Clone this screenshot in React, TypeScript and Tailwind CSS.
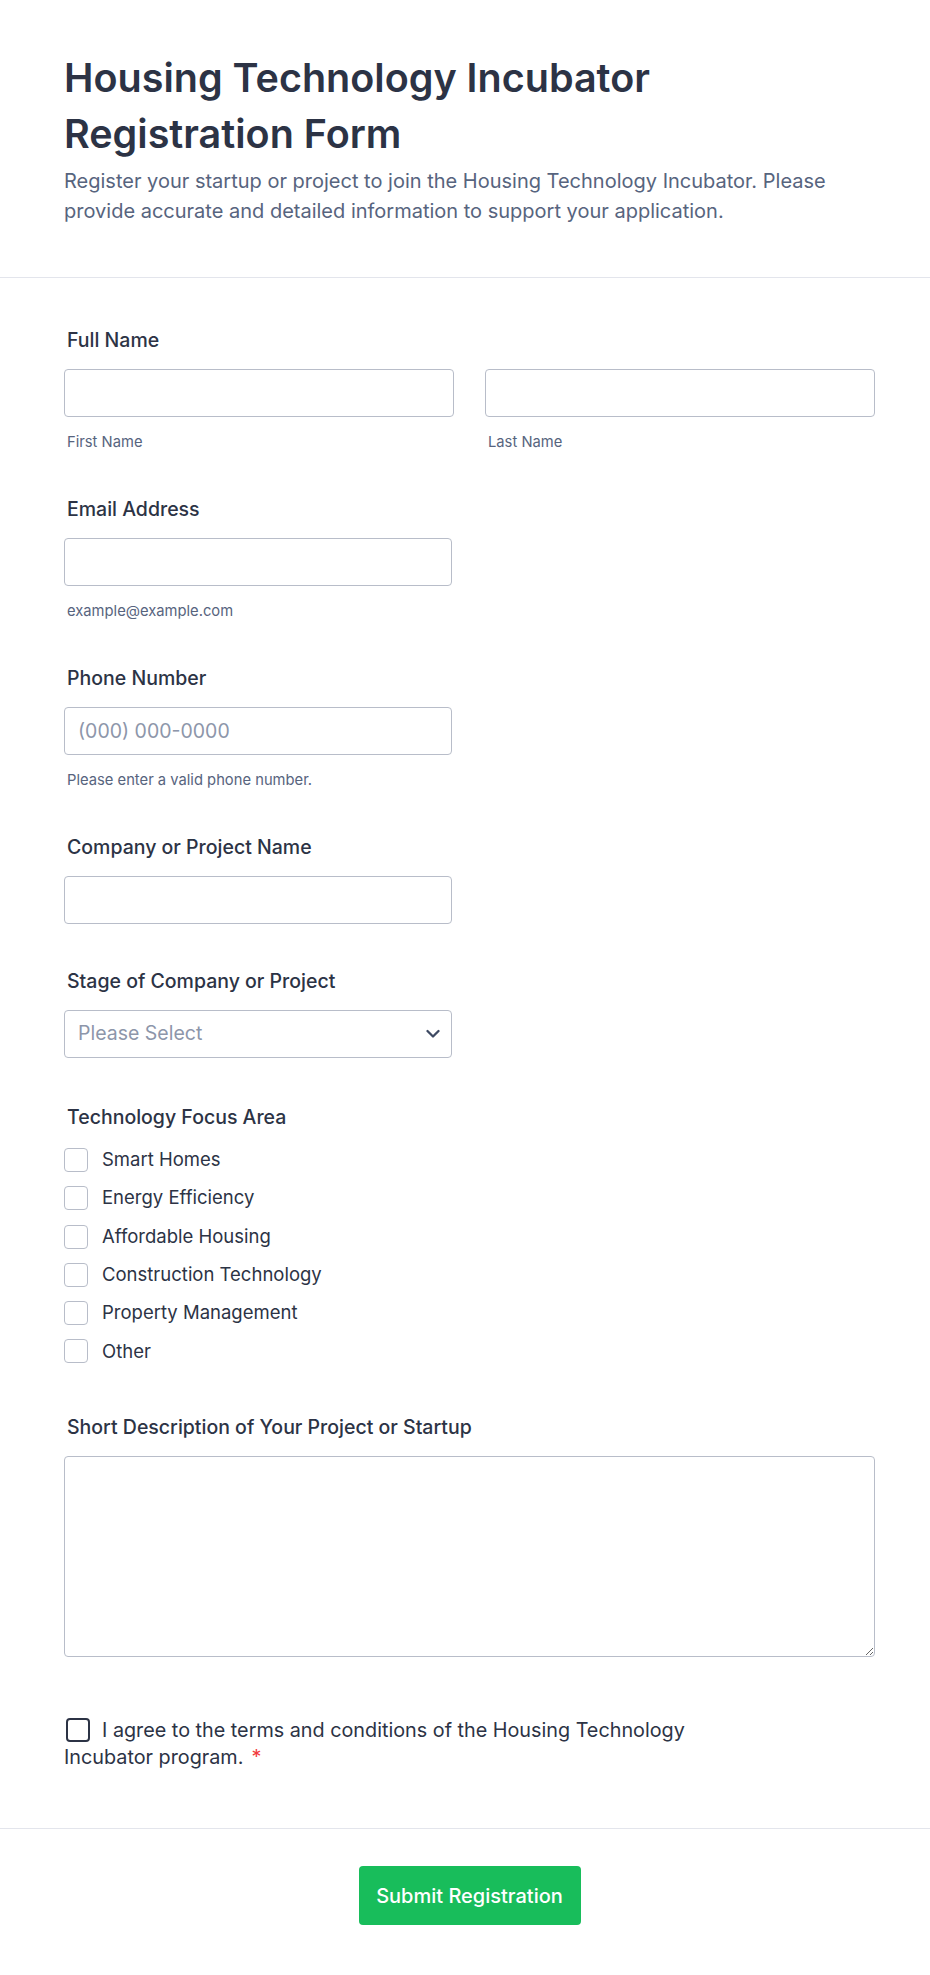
import { useState } from "react";

const focusAreas = [
	"Smart Homes",
	"Energy Efficiency",
	"Affordable Housing",
	"Construction Technology",
	"Property Management",
	"Other",
];

function Label({ children }: { children: React.ReactNode }) {
	return (
		<div className="mb-[17px] pl-[3px] text-[19.5px] leading-[24px] font-medium text-[#2c3345]">
			{children}
		</div>
	);
}

function Hint({ children }: { children: React.ReactNode }) {
	return (
		<p className="mt-[15px] pl-[3px] text-[14.75px] leading-[20px] text-[#57647e]">
			{children}
		</p>
	);
}

const inputClass =
	"block h-[48px] w-full rounded-[4px] border border-[#b8bdc9] bg-white px-[13px] text-[19.5px] text-[#2c3345] placeholder:text-[#8d96aa] outline-none";

export default function App() {
	const [checked, setChecked] = useState<string[]>([]);
	const [agree, setAgree] = useState(false);

	const toggle = (item: string) =>
		setChecked((prev) =>
			prev.includes(item) ? prev.filter((x) => x !== item) : [...prev, item],
		);

	return (
		<div className="min-h-[1975px] bg-white font-[Inter,sans-serif] text-[#2c3345]">
			<div className="border-b border-[#e3e5ec] pt-[50px] pr-[55px] pb-[51px] pl-[64px]">
				<h1 className="text-[39.5px] leading-[56px] font-semibold text-[#2c3345]">
					Housing Technology Incubator
					<br />
					Registration Form
				</h1>
				<p className="mt-[4px] text-[20px] leading-[30px] text-[#57647e]">
					Register your startup or project to join the Housing Technology
					Incubator. Please provide accurate and detailed information to
					support your application.
				</p>
			</div>

			<form className="flex flex-col gap-[45px] pt-[50px] pr-[55px] pb-[57px] pl-[64px]">
				<div>
					<Label>Full Name</Label>
					<div className="grid grid-cols-2 gap-[31px]">
						<div>
							<input className={inputClass} />
							<Hint>First Name</Hint>
						</div>
						<div>
							<input className={inputClass} />
							<Hint>Last Name</Hint>
						</div>
					</div>
				</div>

				<div>
					<Label>Email Address</Label>
					<div className="w-[388px]">
						<input type="email" className={inputClass} />
						<Hint>example@example.com</Hint>
					</div>
				</div>

				<div>
					<Label>Phone Number</Label>
					<div className="w-[388px]">
						<input
							type="tel"
							placeholder="(000) 000-0000"
							className={inputClass}
						/>
						<Hint>Please enter a valid phone number.</Hint>
					</div>
				</div>

				<div>
					<Label>Company or Project Name</Label>
					<div className="w-[388px]">
						<input className={inputClass} />
					</div>
				</div>

				<div>
					<Label>Stage of Company or Project</Label>
					<div className="relative w-[388px]">
						<select
							defaultValue=""
							className="block h-[48px] w-full appearance-none rounded-[4px] border border-[#b8bdc9] bg-white px-[13px] text-[19.5px] text-[#8d96aa] outline-none"
						>
							<option value="" disabled>
								Please Select
							</option>
							<option>Idea</option>
							<option>Prototype</option>
							<option>Early Stage</option>
							<option>Growth</option>
						</select>
						<svg
							className="pointer-events-none absolute top-1/2 right-[12px] size-[14px] -translate-y-1/2"
							viewBox="0 0 14 14"
							fill="none"
						>
							<path
								d="M1.5 4l5.5 5.5L12.5 4"
								stroke="#3e4a63"
								strokeWidth="2.3"
								strokeLinecap="round"
								strokeLinejoin="round"
							/>
						</svg>
					</div>
				</div>

				<div className="mt-[2px]">
					<div className="mb-[19px] pl-[3px] text-[19.5px] leading-[24px] font-medium text-[#2c3345]">
						Technology Focus Area
					</div>
					<div className="flex flex-col gap-[14.3px]">
						{focusAreas.map((item) => (
							<label
								key={item}
								className="flex h-[24px] items-center gap-[14px] text-[18.5px] text-[#2c3345]"
							>
								<input
									type="checkbox"
									checked={checked.includes(item)}
									onChange={() => toggle(item)}
									className="size-[24px] shrink-0 appearance-none rounded-[4px] border border-[#b8bdc9] bg-white checked:border-[#2e69ff] checked:bg-[#2e69ff]"
								/>
								{item}
							</label>
						))}
					</div>
				</div>

				<div className="mt-[7px]">
					<Label>Short Description of Your Project or Startup</Label>
					<textarea className="block h-[201px] w-full rounded-[4px] border border-[#b8bdc9] bg-white px-[13px] py-[10px] text-[19.5px] outline-none" />
				</div>

				<div className="mt-[15px]">
					<label className="block max-w-[660px] text-[19.8px] leading-[27px] text-[#2c3345]">
						<input
							type="checkbox"
							checked={agree}
							onChange={() => setAgree(!agree)}
							className="mr-[12px] ml-[2px] inline-block size-[24px] appearance-none rounded-[4px] border-2 border-[#2c3345] bg-white align-[-5px] checked:bg-[#2c3345]"
						/>
						I agree to the terms and conditions of the Housing Technology
						Incubator program.
						<span className="ml-[8px] text-[#f23a3c]">*</span>
					</label>
				</div>
			</form>

			<div className="flex justify-center border-t border-[#e3e5ec] pt-[37px] pr-[55px] pb-[50px] pl-[64px]">
				<button
					type="button"
					className="h-[59px] w-[222px] rounded-[4px] bg-[#18bd5b] text-[20px] font-medium text-white"
				>
					Submit Registration
				</button>
			</div>
		</div>
	);
}
